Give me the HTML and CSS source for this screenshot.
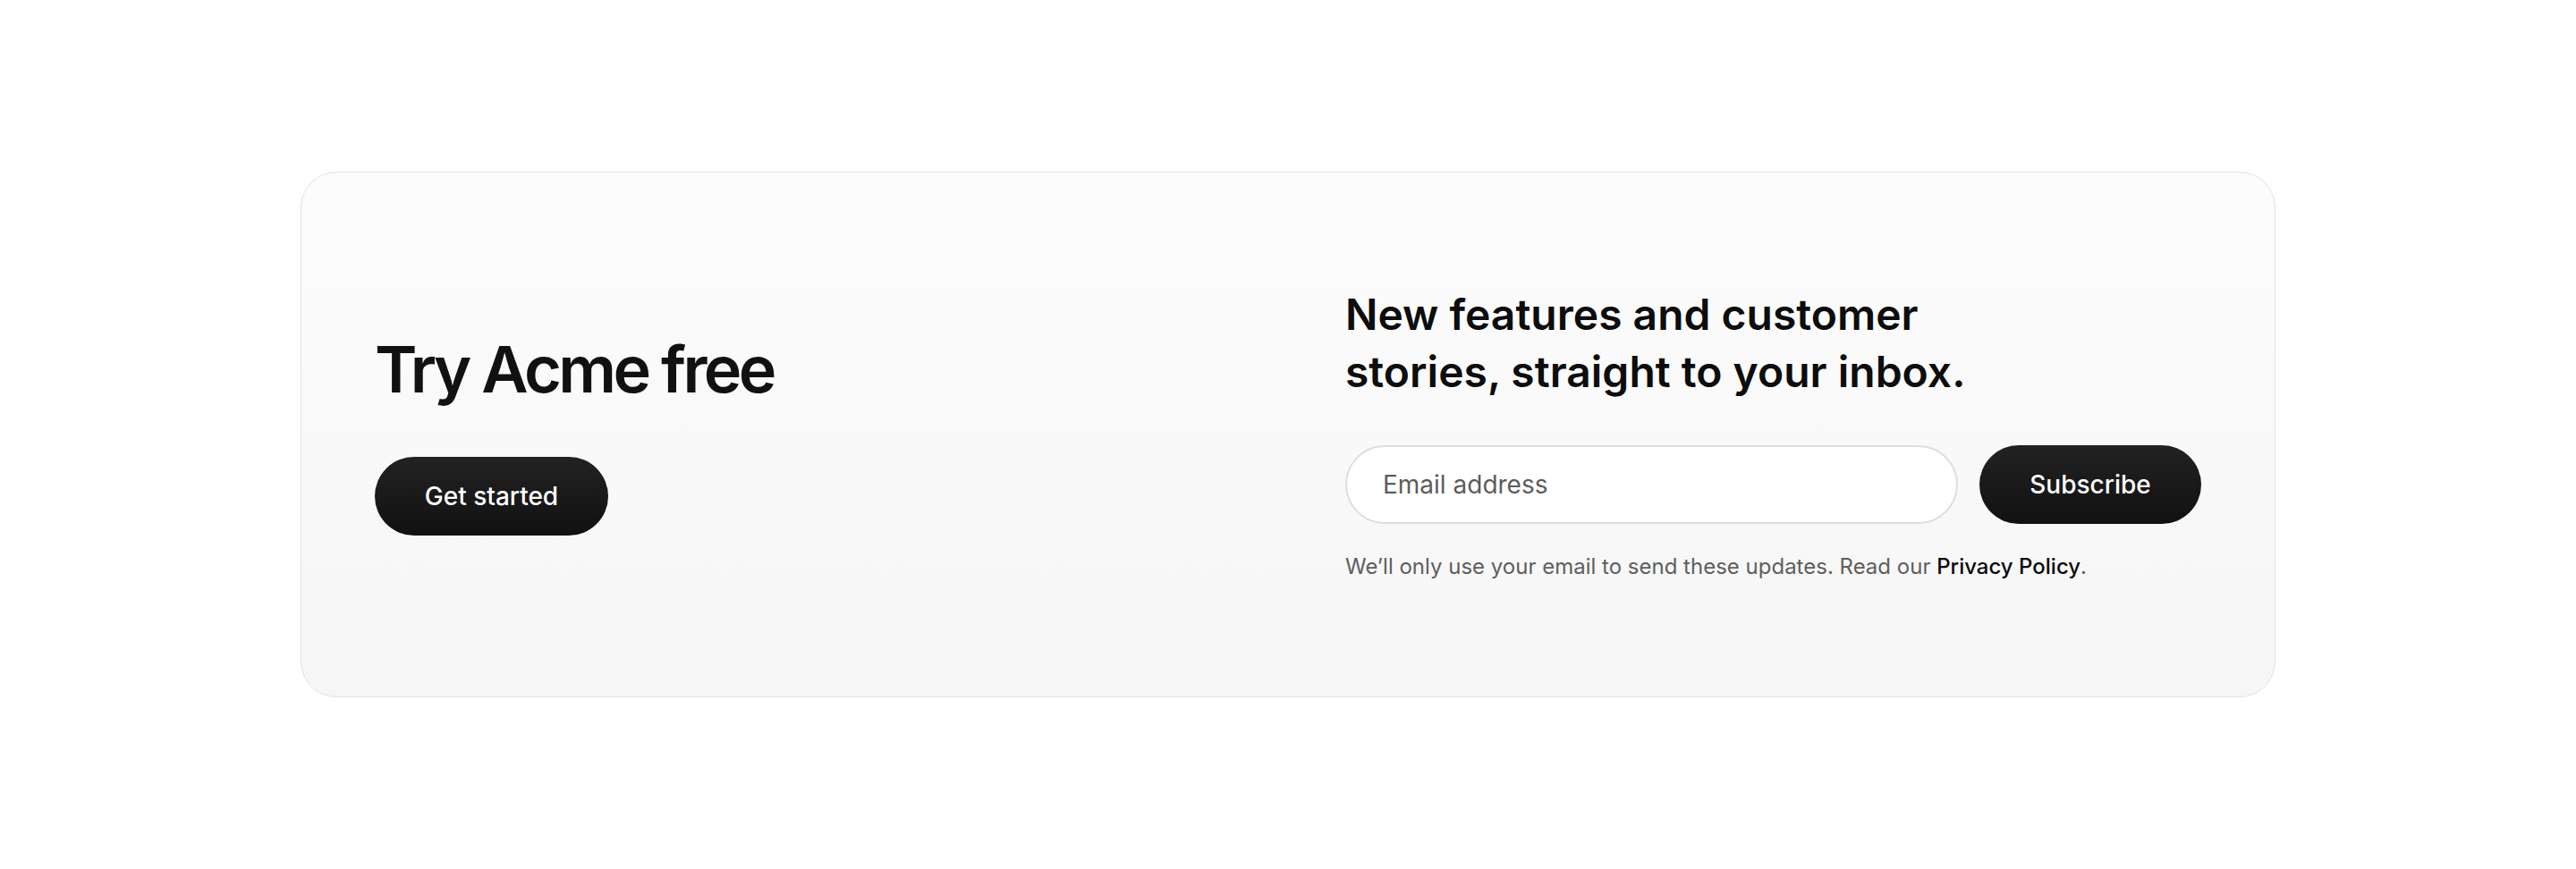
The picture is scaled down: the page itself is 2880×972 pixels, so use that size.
FILE: index.html
```html
<!DOCTYPE html>
<html lang="en">
<head>
<meta charset="utf-8">
<title>Try Acme free</title>
<link rel="stylesheet" href="styles.css">
</head>
<body>
<main class="page">
  <section class="cta-card">
    <div class="cta-left">
      <h2 class="cta-title">Try Acme free</h2>
      <a class="btn btn-dark btn-start" href="#">Get started</a>
    </div>
    <div class="cta-right">
      <h3 class="news-title">New features and customer stories, straight to your inbox.</h3>
      <form class="news-form" onsubmit="return false">
        <input class="news-input" type="email" placeholder="Email address">
        <button class="btn btn-dark btn-sub" type="submit">Subscribe</button>
      </form>
      <p class="news-note">We’ll only use your email to send these updates. Read our <a href="#" class="note-link">Privacy Policy</a>.</p>
    </div>
  </section>
</main>
</body>
</html>
```
FILE: styles.css
```css
* { box-sizing: border-box; }
html, body { margin: 0; padding: 0; background: #ffffff; }
body {
  font-family: Inter, "Noto Sans", "Liberation Sans", sans-serif;
  color: #111111;
}
.page {
  min-height: 972px;
  display: flex;
  align-items: center;
  justify-content: center;
}
.cta-card {
  width: 2208px;
  height: 588px;
  border: 1px solid #e2e2e2;
  border-radius: 40px;
  background: linear-gradient(180deg, #fcfcfc 0%, #f6f6f6 100%);
  padding: 0 82px;
  display: grid;
  grid-template-columns: 1fr 1fr;
  column-gap: 128px;
  align-items: center;
}
.cta-left {
  display: flex;
  flex-direction: column;
  align-items: flex-start;
}
.cta-title {
  margin: 0 0 58px;
  font-size: 72px;
  line-height: 1.1;
  font-weight: 600;
  letter-spacing: -0.05em;
  color: #111111;
}
.btn {
  display: inline-flex;
  align-items: center;
  justify-content: center;
  height: 88px;
  padding: 0 57px;
  border-radius: 44px;
  font-family: inherit;
  font-size: 28px;
  font-weight: 500;
  text-decoration: none;
  border: none;
  cursor: pointer;
}
.btn-dark {
  background: linear-gradient(180deg, #222222 0%, #111111 100%);
  color: #ffffff;
}
.btn-start { width: 261px; padding: 0; }
.btn-sub { width: 248px; padding: 0; flex: none; }
.cta-right {
  display: flex;
  flex-direction: column;
}
.news-title {
  margin: 0 0 50px;
  max-width: 740px;
  font-size: 48px;
  line-height: 64px;
  font-weight: 600;
  letter-spacing: 0;
  color: #0d0d0d;
}
.news-form {
  display: flex;
  gap: 24px;
  margin: 0;
}
.news-input {
  flex: 1;
  min-width: 0;
  height: 88px;
  border: 2px solid #dedede;
  border-radius: 44px;
  background: #ffffff;
  padding: 0 40px;
  font-family: inherit;
  font-size: 28px;
  color: #111111;
  outline: none;
}
.news-input::placeholder { color: #5c5c5c; opacity: 1; }
.news-note {
  margin: 30px 0 0;
  font-size: 24px;
  line-height: 36px;
  color: #5e5e5e;
}
.note-link {
  color: #0a0a0a;
  text-decoration: none;
  font-weight: 500;
}
```
